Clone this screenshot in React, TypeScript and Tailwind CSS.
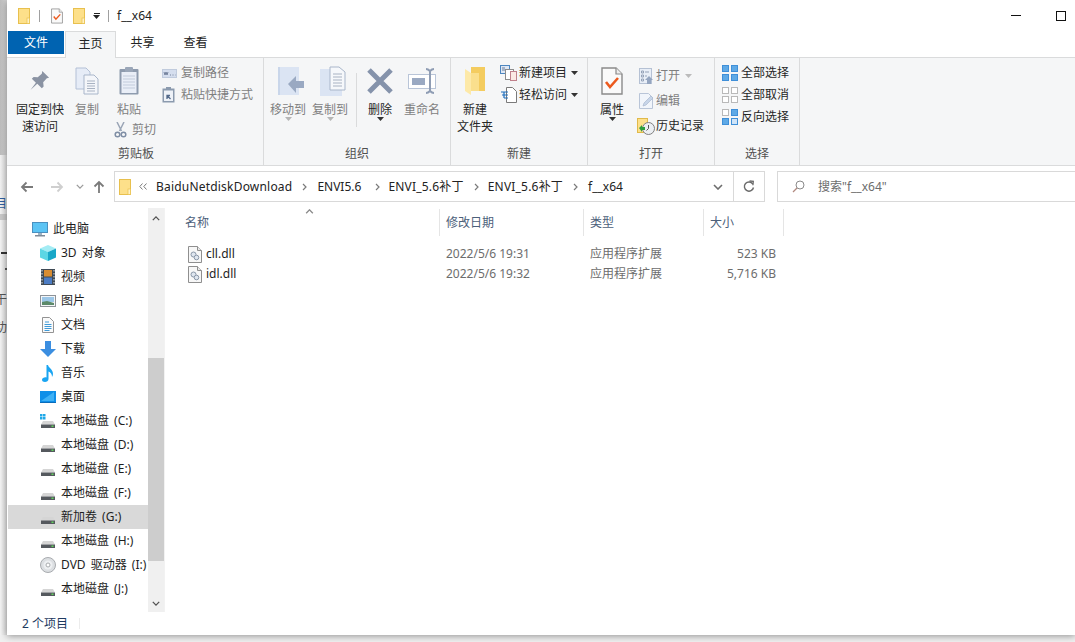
import type { ReactNode } from "react";

// Icons
function FolderFlat({ className = "w-3 h-4" }: { className?: string }) {
  return (
    <svg viewBox="0 0 12 16" className={className}>
      <rect x="0.5" y="0.5" width="11" height="15" fill="#fde08a" stroke="#e8c04e" />
      <rect x="9" y="10" width="2.5" height="5.5" fill="#fff2c4" stroke="#e8c04e" strokeWidth="0.7" />
    </svg>
  );
}

function CheckDoc({ className = "w-3 h-4" }: { className?: string }) {
  return (
    <svg viewBox="0 0 22 28" className={className}>
      <path d="M1 1h14l6 6v20H1z" fill="#fafafa" stroke="#8a8a8a" strokeWidth="1.4" />
      <path d="M15 1v6h6" fill="#eee" stroke="#8a8a8a" strokeWidth="1.2" />
      <path d="M5 15l4 5 8-9" fill="none" stroke="#ec5a1e" strokeWidth="2.6" />
    </svg>
  );
}

function Pin() {
  return (
    <svg viewBox="0 0 22 24" className="h-[22px] w-[20px]">
      <path d="M13.500 1L21 8.500l-2.500.5-4 4.500.5 4.500-2 2-5-5-7.500 7 6-8-4.500-4.500 2-2 4.500.5 4.500-4z" fill="#8a93a3" />
    </svg>
  );
}

function CopyIcon() {
  return (
    <svg viewBox="0 0 24 28" className="h-[28px] w-[24px]">
      <path d="M1 1h10l4 4v17H1z" fill="#e6ecf7" stroke="#b3c0d6" />
      <path d="M9 8h10l4 4v15H9z" fill="#f4f6fa" stroke="#a9b6ca" />
      <path d="M12 14h8M12 16.500h8M12 19h8M12 21.500h8M12 24h8" stroke="#a8b2c2" />
    </svg>
  );
}

function PasteIcon() {
  return (
    <svg viewBox="0 0 20 29" className="h-[29px] w-[20px]">
      <rect x="0.500" y="3" width="19" height="25.500" rx="1" fill="#8e9bae" />
      <rect x="2.500" y="6" width="15" height="21" fill="#e9eef7" />
      <path d="M4 10h12M4 13h12M4 16h12M4 19h12M4 22h12" stroke="#c2cbdb" />
      <rect x="6" y="1" width="8" height="5" rx="1" fill="#9aa6b8" />
    </svg>
  );
}

function Scissors() {
  return (
    <svg viewBox="0 0 13 16" className="h-[16px] w-[13px] shrink-0">
      <path d="M3 0l4.500 9M10 0L5.500 9" stroke="#9aa5b6" strokeWidth="1.500" fill="none" />
      <circle cx="3.500" cy="12.500" r="2.300" fill="none" stroke="#7f8ea5" strokeWidth="1.500" />
      <circle cx="9.500" cy="12.500" r="2.300" fill="none" stroke="#7f8ea5" strokeWidth="1.500" />
    </svg>
  );
}

function CopyPath() {
  return (
    <svg viewBox="0 0 15 9" className="h-[9px] w-[15px]">
      <rect x="0.500" y="0.500" width="14" height="8" fill="#d5deee" stroke="#c0cbdd" />
      <path d="M2 3l1 3 1-3 1 3 1-3M8 6h1M10.500 6h1M13 6h.5" stroke="#5f6f8a" strokeWidth="0.800" fill="none" />
    </svg>
  );
}

function PasteShortcut() {
  return (
    <svg viewBox="0 0 13 16" className="h-[16px] w-[13px]">
      <rect x="0.500" y="1.500" width="12" height="14" fill="#8b9aae" />
      <rect x="2" y="3.500" width="9" height="10.500" fill="#eef2f8" />
      <rect x="4" y="0" width="5" height="3" fill="#8b9aae" />
      <path d="M5 12V8.500h3M5.500 9l3 3" stroke="#52698a" strokeWidth="1.300" fill="none" />
    </svg>
  );
}

function MoveTo() {
  return (
    <svg viewBox="0 0 26 28" className="ml-[6px] h-[28px] w-[26px]">
      <rect x="0" y="0" width="21" height="28" fill="#dbe4f3" />
      <rect x="0" y="0" width="2" height="28" fill="#c9d6ea" />
      <path d="M10 17l8-8v5h8v7h-8v5z" fill="#9aa9c2" />
    </svg>
  );
}

function CopyTo() {
  return (
    <svg viewBox="0 0 26 30" className="ml-[6px] h-[30px] w-[26px]">
      <rect x="0" y="3" width="22" height="27" fill="#dbe4f3" />
      <path d="M10 1h9l6 5v18H10z" fill="#f6f8fb" stroke="#a9b6ca" />
      <path d="M13 8h9M13 11h9M13 14h9M13 17h9M13 20h9" stroke="#a8b2c2" />
    </svg>
  );
}

function DeleteX() {
  return (
    <svg viewBox="0 0 26 26" className="h-[26px] w-[26px]">
      <path d="M2 2l22 22M24 2L2 24" stroke="#8593ab" strokeWidth="5" />
    </svg>
  );
}

function Rename() {
  return (
    <svg viewBox="0 0 29 26" className="h-[26px] w-[29px]">
      <rect x="0.500" y="6.500" width="27" height="14" fill="#fff" stroke="#b9c5d8" />
      <rect x="4" y="10" width="13" height="7" fill="#9aa9c2" />
      <path d="M18 1c2 0 3 1 4 2 1-1 2-2 4-2M22 3v20M18 25c2 0 3-1 4-2 1 1 2 2 4 2" stroke="#8f9db4" strokeWidth="2" fill="none" />
    </svg>
  );
}

function NewFolder() {
  return (
    <svg viewBox="0 0 20 28" className="h-[28px] w-[20px]">
      <path d="M6 0h14v24H6z" fill="#f4cc5f" />
      <path d="M0 2l6 4v22L0 24z" fill="#fde9a8" />
      <path d="M6 6h8v18H6z" fill="#fadf8d" />
    </svg>
  );
}

function NewItem() {
  return (
    <svg viewBox="0 0 17 16" className="h-[16px] w-[17px]">
      <rect x="0.500" y="0.500" width="9" height="8" fill="#dfe8f5" stroke="#4d86c0" />
      <path d="M2 3h3M2 5h3" stroke="#6a7f9c" />
      <rect x="5.500" y="4.500" width="8" height="10" fill="#fff" stroke="#8c8c8c" />
      <rect x="10.500" y="6.500" width="6" height="9" fill="#fbe9e4" stroke="#c0818c" />
    </svg>
  );
}

function EasyAccess() {
  return (
    <svg viewBox="0 0 17 16" className="h-[16px] w-[17px]">
      <path d="M6.500 0.500h6l4 4v11h-10z" fill="#fff" stroke="#7a7a7a" />
      <path d="M1 5h7M2 8h6M4 11h4" stroke="#1f6fbe" strokeWidth="1.200" />
      <path d="M4 5v6" stroke="#1f6fbe" strokeWidth="1.200" />
    </svg>
  );
}

function OpenIcon() {
  return (
    <svg viewBox="0 0 14 16" className="h-[16px] w-[14px]">
      <rect x="0.500" y="0.500" width="12" height="15" fill="#e8eef7" stroke="#b5c1d4" />
      <path d="M2.500 3h2v2h-2zM2.500 7h2v2h-2zM2.500 11h2v2h-2zM6 4h4M6 8h2" stroke="#94a2b8" fill="none" />
      <path d="M10 8l4 4h-2v4H8v-4H6z" fill="#94a5c0" />
    </svg>
  );
}

function EditIcon() {
  return (
    <svg viewBox="0 0 15 16" className="h-[16px] w-[15px]">
      <path d="M0.500 0.500h9l4 4v11H.5z" fill="#f1f5fb" stroke="#b9c5d8" />
      <path d="M4 13l1-3 7-7 2 2-7 7z" fill="#c7d5e9" stroke="#a9b9d0" strokeWidth="0.700" />
    </svg>
  );
}

function HistoryIcon() {
  return (
    <svg viewBox="0 0 18 17" className="h-[17px] w-[18px]">
      <rect x="0.500" y="0.500" width="10" height="14" fill="#fde08a" stroke="#e0b94a" />
      <circle cx="11.500" cy="10.500" r="6" fill="#eceff3" stroke="#808080" />
      <path d="M11.500 7v3.500l-2 2" stroke="#555" fill="none" />
      <path d="M2 10l3-3v2h3v3H5v2z" fill="#2f9e3f" />
    </svg>
  );
}

function SelectIcon({ fill, stroke, inverse }: { fill: string; stroke: string; inverse?: boolean }) {
  const cells: [number, number][] = [
    [0.5, 0.5],
    [9.5, 0.5],
    [0.5, 9.5],
    [9.5, 9.5],
  ];
  return (
    <svg viewBox="0 0 16 16" className="h-[16px] w-[16px]">
      {cells.map(([x, y], i) => (
        <rect
          key={i}
          x={x}
          y={y}
          width="6"
          height="6"
          stroke={inverse && i === 0 ? "#b9b9b9" : stroke}
          fill={inverse && i === 0 ? "#fff" : inverse && i === 3 ? "#cfe4f8" : fill}
        />
      ))}
    </svg>
  );
}

function Caret({ color = "#444" }: { color?: string }) {
  return (
    <svg viewBox="0 0 7 4" className="h-[4px] w-[7px]">
      <path d="M0 0h7L3.500 4z" fill={color} />
    </svg>
  );
}

function ArrowLeft({ color }: { color: string }) {
  return (
    <svg viewBox="0 0 14 12" className="h-[12px] w-[14px]">
      <path d="M13 6H2M6.500 1.500L2 6l4.500 4.500" stroke={color} strokeWidth="1.800" fill="none" />
    </svg>
  );
}

function ArrowRight({ color }: { color: string }) {
  return (
    <svg viewBox="0 0 14 12" className="h-[12px] w-[14px]">
      <path d="M1 6h11M7.500 1.500L12 6l-4.500 4.500" stroke={color} strokeWidth="1.800" fill="none" />
    </svg>
  );
}

function ArrowUp() {
  return (
    <svg viewBox="0 0 12 14" className="h-[14px] w-[12px]">
      <path d="M6 13V2M1.500 6.500L6 2l4.500 4.500" stroke="#7a7a7a" strokeWidth="1.800" fill="none" />
    </svg>
  );
}

function Chevron({ up, color = "#6d6d6d", className = "h-[6px] w-[10px]" }: { up?: boolean; color?: string; className?: string }) {
  return (
    <svg viewBox="0 0 10 6" className={className}>
      <path d={up ? "M1 5l4-4 4 4" : "M1 1l4 4 4-4"} stroke={color} strokeWidth="1.600" fill="none" />
    </svg>
  );
}

function CrumbSep() {
  return (
    <svg viewBox="0 0 5 8" className="h-[8px] w-[5px]">
      <path d="M1 1l3 3-3 3" stroke="#7b7b7b" strokeWidth="1.200" fill="none" />
    </svg>
  );
}

function DoubleChevron() {
  return (
    <svg viewBox="0 0 8 7" className="h-[7px] w-[8px]">
      <path d="M3.500.500L.800 3.500l2.700 3M7.500.500L4.800 3.500l2.700 3" stroke="#7b7b7b" fill="none" />
    </svg>
  );
}

function Refresh() {
  return (
    <svg viewBox="0 0 12 13" className="h-[13px] w-[12px]">
      <path d="M9.800 4A4.600 4.600 0 1 0 10.500 7.500" stroke="#6b6b6b" strokeWidth="1.400" fill="none" />
      <path d="M6.500 1l3.800.4-.4 3.800" stroke="#6b6b6b" strokeWidth="1.300" fill="none" />
    </svg>
  );
}

function SearchGlass() {
  return (
    <svg viewBox="0 0 13 13" className="h-[13px] w-[13px]">
      <circle cx="8" cy="5" r="4" stroke="#8a8a8a" fill="none" />
      <path d="M5 8l-4 4" stroke="#b28a80" strokeWidth="1.300" />
    </svg>
  );
}

function DllIcon() {
  return (
    <svg viewBox="0 0 14 17" className="h-[17px] w-[14px]">
      <path d="M.5.500h9l4 4v12H.5z" fill="#f7f7f7" stroke="#8f8f8f" />
      <path d="M9.500.500v4h4" fill="#e8e8e8" stroke="#8f8f8f" />
      <circle cx="5.500" cy="8.500" r="2.500" fill="#dfe6ef" stroke="#8a97a8" />
      <circle cx="8.500" cy="11.500" r="2.300" fill="#dfe6ef" stroke="#8a97a8" />
    </svg>
  );
}

function PcIcon() {
  return (
    <svg viewBox="0 0 16 15" className="h-[15px] w-[16px]">
      <rect x="0.500" y="0.500" width="15" height="10" fill="#5cc4f4" stroke="#4a90c0" />
      <rect x="6" y="11" width="4" height="2" fill="#9fb3c4" />
      <rect x="3" y="13" width="10" height="1.500" fill="#7f8c99" />
    </svg>
  );
}

function Cube() {
  return (
    <svg viewBox="0 0 16 16" className="h-[16px] w-[16px]">
      <path d="M8 0l8 3.500-8 3.500L0 3.500z" fill="#a4ecf4" />
      <path d="M0 3.500L8 7v9l-8-3.500z" fill="#5cd6e4" />
      <path d="M16 3.500L8 7v9l8-3.500z" fill="#18a7c8" />
    </svg>
  );
}

function Film() {
  return (
    <svg viewBox="0 0 14 16" className="h-[16px] w-[14px]">
      <rect width="14" height="16" fill="#3f4a55" />
      <rect x="3" y="1" width="8" height="6.500" fill="#d98d32" />
      <rect x="3" y="8.500" width="8" height="6.500" fill="#4c7cc4" />
      <path d="M1 1v14M13 1v14" stroke="#dfe3e8" strokeDasharray="1.500 1.500" />
    </svg>
  );
}

function PicIcon() {
  return (
    <svg viewBox="0 0 16 12" className="h-[12px] w-[16px]">
      <rect x="0.500" y="0.500" width="15" height="11" fill="#f4f6f8" stroke="#8d9298" />
      <rect x="2" y="2" width="12" height="5" fill="#9cc7e8" />
      <path d="M2 10V7l5-1 7 2v2z" fill="#5c8a6a" />
    </svg>
  );
}

function DocsIcon() {
  return (
    <svg viewBox="0 0 12 16" className="h-[16px] w-[12px]">
      <path d="M.5.500h7l4 4v11H.5z" fill="#fafafa" stroke="#939393" />
      <path d="M3 5h4M2.500 7.500h7M2.500 9.500h7M2.500 11.500h7M2.500 13.500h5" stroke="#3f9ad8" />
    </svg>
  );
}

function DownloadIcon() {
  return (
    <svg viewBox="0 0 16 16" className="h-[16px] w-[16px]">
      <path d="M5 0h6v8h5l-8 8-8-8h5z" fill="#3b8ee0" />
    </svg>
  );
}

function MusicIcon() {
  return (
    <svg viewBox="0 0 12 17" className="h-[17px] w-[12px]">
      <path d="M4.500 0h1.500c.5 3 5 4 5 9 0 1-.3 2-1 3 .2-3-1.500-4.500-3.500-5.500V14c0 1.800-1.800 3-3.500 3S0 16.200 0 14.800C0 13 2.500 12 4.500 12.500z" fill="#1aa5f2" />
    </svg>
  );
}

function DesktopIcon() {
  return (
    <svg viewBox="0 0 16 12" className="h-[12px] w-[16px]">
      <rect width="16" height="12" fill="#0f8fe8" />
      <path d="M1 10L14 1v9z" fill="#3fb1f5" />
      <rect y="11" width="16" height="1" fill="#0a6cba" />
    </svg>
  );
}

function DriveIcon({ windows }: { windows?: boolean }) {
  return (
    <svg viewBox="0 0 16 15" className="h-[15px] w-[16px]">
      {windows && (
        <g fill="#1fa8e8">
          <rect x="0" y="0" width="2.500" height="2.500" />
          <rect x="3" y="0" width="2.500" height="2.500" />
          <rect x="0" y="3" width="2.500" height="2.500" />
          <rect x="3" y="3" width="2.500" height="2.500" />
        </g>
      )}
      <path d="M3 7h10l2 3.500H1z" fill="#d5d5d5" />
      <rect x="1" y="10.500" width="14" height="3.500" fill="#55595e" />
      <rect x="11.500" y="11.500" width="2" height="1.500" fill="#5fd35a" />
    </svg>
  );
}

function DiscIcon() {
  return (
    <svg viewBox="0 0 16 16" className="h-[16px] w-[16px]">
      <circle cx="8" cy="8" r="7.500" fill="#dcdfe2" stroke="#a8abaf" />
      <circle cx="8" cy="8" r="4.500" fill="#eef0f2" />
      <circle cx="8" cy="8" r="2" fill="#fff" stroke="#a8abaf" />
    </svg>
  );
}

// Ribbon pieces
function BigButton({ icon, label, dim, caret }: { icon: ReactNode; label: ReactNode; dim?: boolean; caret?: boolean }) {
  return (
    <div className={`flex w-[42px] flex-col items-center ${dim ? "text-[#7f7f7f]" : "text-[#262626]"}`}>
      <div className="flex h-[31px] items-center justify-center">{icon}</div>
      <div className="mt-[5px] whitespace-nowrap text-center leading-[17px]">{label}</div>
      {caret && (
        <div className="-mt-[1px]">
          <Caret color={dim ? "#b5b5b5" : "#333"} />
        </div>
      )}
    </div>
  );
}

function SmallButton({ icon, label, dim, narrow, children }: { icon: ReactNode; label: string; dim?: boolean; narrow?: boolean; children?: ReactNode }) {
  return (
    <div className={`flex h-[22px] items-center ${dim ? "text-[#7f7f7f]" : "text-[#262626]"}`}>
      <div className={`flex justify-start ${narrow ? "w-[17px]" : "w-[19px]"}`}>{icon}</div>
      <span className="whitespace-nowrap leading-[22px]">{label}</span>
      {children}
    </div>
  );
}

function Group({ title, width, children }: { title: string; width: string; children: ReactNode }) {
  return (
    <div className={`flex h-full flex-col border-r border-[#dadbdc] ${width}`}>
      <div className="flex h-[85px] pt-[7px]">{children}</div>
      <div className="mt-[2px] text-center leading-[18px] text-[#505050]">{title}</div>
    </div>
  );
}

const navItems: { icon: ReactNode; label: string; selected?: boolean }[] = [
  { icon: <Cube />, label: "3D 对象" },
  { icon: <Film />, label: "视频" },
  { icon: <PicIcon />, label: "图片" },
  { icon: <DocsIcon />, label: "文档" },
  { icon: <DownloadIcon />, label: "下载" },
  { icon: <MusicIcon />, label: "音乐" },
  { icon: <DesktopIcon />, label: "桌面" },
  { icon: <DriveIcon windows />, label: "本地磁盘 (C:)" },
  { icon: <DriveIcon />, label: "本地磁盘 (D:)" },
  { icon: <DriveIcon />, label: "本地磁盘 (E:)" },
  { icon: <DriveIcon />, label: "本地磁盘 (F:)" },
  { icon: <DriveIcon />, label: "新加卷 (G:)", selected: true },
  { icon: <DriveIcon />, label: "本地磁盘 (H:)" },
  { icon: <DiscIcon />, label: "DVD 驱动器 (I:)" },
  { icon: <DriveIcon />, label: "本地磁盘 (J:)" },
];

const files = [
  { name: "cll.dll", date: "2022/5/6 19:31", type: "应用程序扩展", size: "523 KB" },
  { name: "idl.dll", date: "2022/5/6 19:32", type: "应用程序扩展", size: "5,716 KB" },
];

function LeftEdge() {
  return (
    <div className="flex h-[635px] w-[7px] shrink-0 flex-col overflow-hidden text-[12px] leading-[14px] text-[#333]">
      <div className="h-[155px] bg-gradient-to-r from-[#bdbdbd] to-[#d6d6d6]" />
      <div className="flex h-[59px] flex-col bg-gradient-to-r from-[#f2f2f2] to-[#dedede]">
        <div className="mt-[42px] -ml-[5px] w-[12px] text-[#2f5f9e]">目</div>
      </div>
      <div className="h-[6px] bg-[#c8c8c8]" />
      <div className="flex h-[415px] flex-col bg-gradient-to-r from-[#f4f4f4] to-[#dcdcdc]">
        <div className="mt-[32px] ml-[1px] h-[2px] w-[6px] bg-[#333]" />
        <div className="mt-[14px] ml-[5px] h-[2px] w-[2px] bg-[#555]" />
        <div className="mt-[23px] -ml-[5px] w-[12px] text-[#555]">干</div>
        <div className="mt-[14px] -ml-[5px] w-[12px] text-[#555]">功</div>
      </div>
    </div>
  );
}

export default function App() {
  return (
    <div className="flex h-[642px] w-[1075px] overflow-hidden bg-[#f0f0f0] text-[12px] [font-family:'Noto_Sans','Noto_Sans_CJK_SC',sans-serif]">
      <LeftEdge />
      <div className="flex h-[635px] flex-1 flex-col bg-white shadow-[0_1px_7px_rgba(0,0,0,0.4)]">
        {/* Title bar */}
        <div className="flex h-[31px] items-center pl-[11px] pr-[9px]">
          <FolderFlat />
          <div className="ml-[9px] h-[12px] w-px bg-[#a0a0a0]" />
          <div className="ml-[11px]">
            <CheckDoc />
          </div>
          <div className="ml-[10px]">
            <FolderFlat />
          </div>
          <div className="ml-[8px] flex flex-col items-center gap-[1px]">
            <div className="h-px w-[6px] bg-[#222]" />
            <Caret color="#222" />
          </div>
          <div className="ml-[8px] h-[12px] w-px bg-[#a0a0a0]" />
          <div className="ml-[8px] text-[#222]">f__x64</div>
          <div className="ml-auto h-px w-[10px] bg-[#111]" />
          <div className="ml-[35px] h-[10px] w-[10px] border border-[#111]" />
        </div>

        {/* Tabs */}
        <div className="flex h-[26px] text-[#222]">
          <div className="ml-px flex h-[23px] w-[56px] items-center justify-center bg-[#0063b1] text-white">文件</div>
          <div className="relative z-10 ml-px flex h-[27px] w-[51px] items-center justify-center border-x border-t border-[#dadbdc] bg-[#f5f6f7] pb-[3px]">主页</div>
          <div className="flex h-[23px] w-[53px] items-center justify-center">共享</div>
          <div className="flex h-[23px] w-[53px] items-center justify-center">查看</div>
        </div>

        {/* Ribbon */}
        <div className="flex h-[109px] border-y border-[#dadbdc] bg-[#f5f6f7] pl-[2px]">
          <Group title="剪贴板" width="w-[255px]">
            <div className="ml-[10px] w-[42px]">
              <BigButton icon={<Pin />} label={<>固定到快<br />速访问</>} />
            </div>
            <div className="ml-[5px]">
              <BigButton icon={<CopyIcon />} label="复制" dim />
            </div>
            <div className="flex w-[42px] flex-col">
              <BigButton icon={<PasteIcon />} label="粘贴" dim />
              <div className="ml-[6px] mt-[3px] flex w-[48px] items-center text-[#7f7f7f]">
                <Scissors />
                <span className="ml-[5px] whitespace-nowrap">剪切</span>
              </div>
            </div>
            <div className="ml-[12px] -mt-[3px] flex flex-col">
              <SmallButton icon={<CopyPath />} label="复制路径" dim />
              <SmallButton icon={<PasteShortcut />} label="粘贴快捷方式" dim />
            </div>
          </Group>

          <Group title="组织" width="w-[187px]">
            <div className="ml-[3px]">
              <BigButton icon={<MoveTo />} label="移动到" dim caret />
            </div>
            <BigButton icon={<CopyTo />} label="复制到" dim caret />
            <div className="ml-[5px] mr-[2px] mt-[8px] h-[54px] w-px bg-[#dadbdc]" />
            <BigButton icon={<DeleteX />} label="删除" caret />
            <BigButton icon={<Rename />} label="重命名" dim />
          </Group>

          <Group title="新建" width="w-[137px]">
            <div className="ml-[3px]">
              <BigButton icon={<NewFolder />} label={<>新建<br />文件夹</>} />
            </div>
            <div className="ml-[4px] -mt-[3px] flex flex-col">
              <SmallButton icon={<NewItem />} label="新建项目">
                <span className="ml-[4px]">
                  <Caret color="#333" />
                </span>
              </SmallButton>
              <SmallButton icon={<EasyAccess />} label="轻松访问">
                <span className="ml-[4px]">
                  <Caret color="#333" />
                </span>
              </SmallButton>
            </div>
          </Group>

          <Group title="打开" width="w-[127px]">
            <div className="ml-[3px]">
              <BigButton icon={<CheckDoc className="h-[28px] w-[22px]" />} label="属性" caret />
            </div>
            <div className="ml-[6px] flex flex-col">
              <SmallButton icon={<OpenIcon />} label="打开" dim narrow>
                <span className="ml-[5px]">
                  <Caret color="#bbb" />
                </span>
              </SmallButton>
              <div className="mt-[3px]">
                <SmallButton icon={<EditIcon />} label="编辑" dim narrow />
              </div>
              <div className="-ml-[2px] mt-[3px]">
                <SmallButton icon={<HistoryIcon />} label="历史记录" />
              </div>
            </div>
          </Group>

          <Group title="选择" width="w-[85px]">
            <div className="ml-[7px] -mt-[3px] flex flex-col">
              <SmallButton icon={<SelectIcon fill="#5ea9e6" stroke="#3f8fd8" />} label="全部选择" />
              <SmallButton icon={<SelectIcon fill="#fff" stroke="#b9b9b9" />} label="全部取消" />
              <SmallButton icon={<SelectIcon fill="#5ea9e6" stroke="#3f8fd8" inverse />} label="反向选择" />
            </div>
          </Group>
        </div>

        {/* Address row */}
        <div className="flex h-[42px] items-start pt-[5px]">
          <div className="flex h-[31px] w-[107px] shrink-0 items-center pl-[13px]">
            <ArrowLeft color="#7a7a7a" />
            <div className="ml-[16px]">
              <ArrowRight color="#cfcfcf" />
            </div>
            <div className="ml-[12px]">
              <Chevron color="#9a9a9a" className="h-[5px] w-[8px]" />
            </div>
            <div className="ml-[9px]">
              <ArrowUp />
            </div>
          </div>
          <div className="flex h-[31px] w-[651px] shrink-0 items-center border border-[#d9d9d9] text-[#222]">
            <div className="ml-[4px]">
              <FolderFlat />
            </div>
            <span className="ml-[8px]"><DoubleChevron /></span>
            <span className="ml-[9px] tracking-[0.2px]">BaiduNetdiskDownload</span>
            <span className="ml-[10px]"><CrumbSep /></span>
            <span className="ml-[10px]">ENVI5.6</span>
            <span className="ml-[14px]"><CrumbSep /></span>
            <span className="ml-[8px] tracking-[0.2px]">ENVI_5.6补丁</span>
            <span className="ml-[10px]"><CrumbSep /></span>
            <span className="ml-[9px] tracking-[0.2px]">ENVI_5.6补丁</span>
            <span className="ml-[10px]"><CrumbSep /></span>
            <span className="ml-[10px]">f__x64</span>
            <div className="ml-auto flex h-full w-[31px] items-center justify-center border-r border-[#d9d9d9]">
              <Chevron />
            </div>
            <div className="flex h-full w-[30px] items-center justify-center">
              <Refresh />
            </div>
          </div>
          <div className="ml-[12px] flex h-[31px] flex-1 items-center border-y border-l border-[#d9d9d9] pl-[14px] text-[#6d6d6d]">
            <SearchGlass />
            <span className="ml-[13px]">搜索"f__x64"</span>
          </div>
        </div>

        {/* Main */}
        <div className="flex h-[404px]">
          {/* Nav tree */}
          <div className="w-[141px] shrink-0 pl-px pt-[9px] text-[#1e1e1e] [word-spacing:2px]">
            <div className="flex h-[24px] items-center pl-[24px]">
              <PcIcon />
              <span className="ml-[5px]">此电脑</span>
            </div>
            {navItems.map((item) => (
              <div key={item.label} className={`flex h-[24px] items-center pl-[32px] ${item.selected ? "bg-[#d9d9d9]" : ""}`}>
                <div className="flex w-[16px] justify-center">{item.icon}</div>
                <span className="ml-[5px] whitespace-nowrap">{item.label}</span>
              </div>
            ))}
          </div>

          {/* Nav scrollbar */}
          <div className="flex h-[404px] w-[16px] shrink-0 flex-col bg-[#f0f0f0]">
            <div className="flex h-[20px] items-center justify-center">
              <Chevron up color="#505050" className="h-[5px] w-[8px]" />
            </div>
            <div className="h-[130px]" />
            <div className="h-[203px] bg-[#cdcdcd]" />
            <div className="flex-1" />
            <div className="flex h-[17px] items-center justify-center">
              <Chevron color="#505050" className="h-[5px] w-[8px]" />
            </div>
          </div>

          {/* File list */}
          <div className="flex-1 border-l border-[#f2f2f2]">
            <div className="relative mt-px flex h-[27px] text-[#4c607a]">
              <div className="w-[275px] border-r border-[#e5e5e5] pl-[20px] leading-[27px]">名称</div>
              <div className="w-[144px] border-r border-[#e5e5e5] pl-[6px] leading-[27px]">修改日期</div>
              <div className="w-[120px] border-r border-[#e5e5e5] pl-[6px] leading-[27px]">类型</div>
              <div className="w-[80px] border-r border-[#e5e5e5] pl-[6px] leading-[27px]">大小</div>
              <div className="absolute left-[140px] top-0">
                <Chevron up color="#8a8a8a" className="h-[5px] w-[9px]" />
              </div>
            </div>
            <div className="mt-[8px]">
              {files.map((file) => (
                <div key={file.name} className="flex h-[20px] items-center text-[#6d6d6d]">
                  <div className="flex w-[275px] items-center pl-[23px] text-[#1e1e1e]">
                    <DllIcon />
                    <span className="ml-[4px]">{file.name}</span>
                  </div>
                  <div className="w-[144px] pl-[6px]">{file.date}</div>
                  <div className="w-[120px] pl-[6px]">{file.type}</div>
                  <div className="w-[72px] text-right">{file.size}</div>
                </div>
              ))}
            </div>
          </div>
        </div>

        {/* Status bar */}
        <div className="flex h-[23px] items-center pl-[15px] text-[#1e3a5f]">
          <span>2 个项目</span>
          <div className="ml-[11px] h-[11px] w-px bg-[#ececec]" />
        </div>
      </div>
    </div>
  );
}
